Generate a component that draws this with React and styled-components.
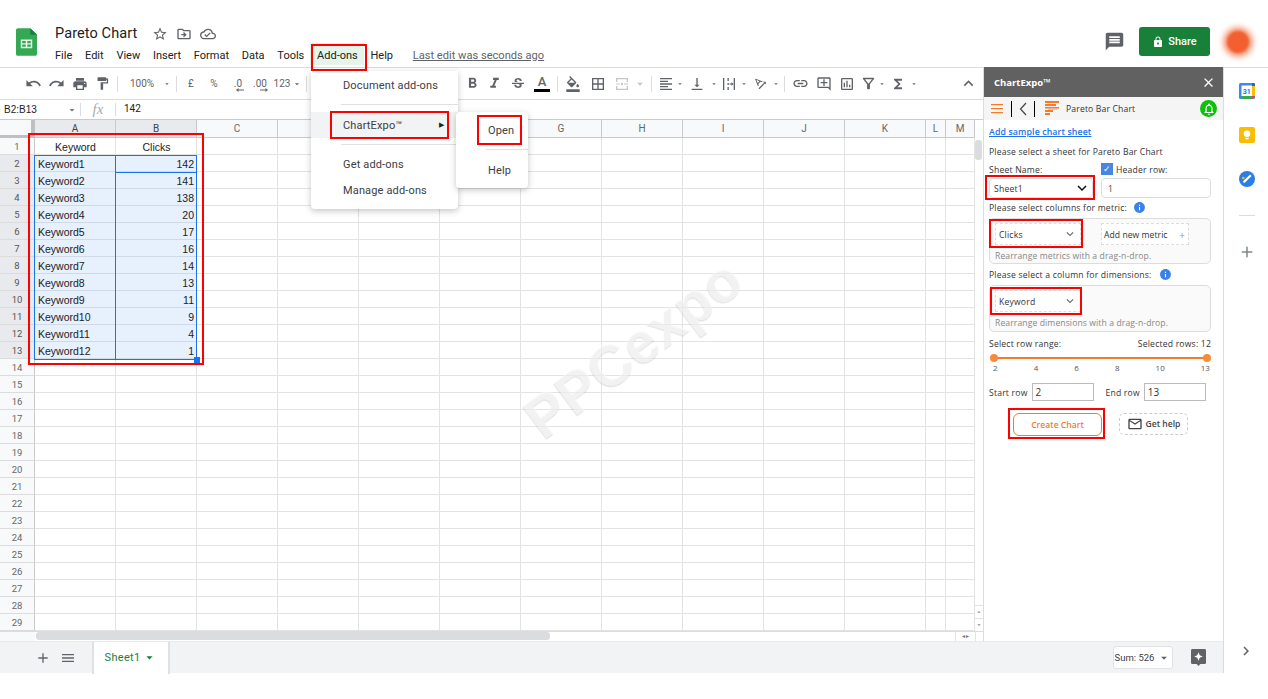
import React from "react";
import styled, { createGlobalStyle } from "styled-components";
import {
  MdUndo, MdRedo, MdPrint, MdFormatPaint, MdFormatBold, MdFormatItalic, MdStrikethroughS,
  MdFormatColorFill, MdBorderAll, MdFormatAlignLeft, MdVerticalAlignBottom, MdLink,
  MdOutlineAddComment, MdOutlineInsertChart, MdOutlineFilterAlt, MdFunctions, MdExpandLess, MdStarBorder,
  MdOutlineDriveFileMove, MdOutlineCloudDone, MdLock, MdMessage, MdAdd, MdMenu, MdArrowDropDown,
  MdClose, MdNotificationsNone, MdChevronRight, MdExpandMore, MdInfo, MdMailOutline,
  MdKeyboardArrowDown, MdTextRotationAngleup,
} from "react-icons/md";

const GlobalStyle = createGlobalStyle`
  html, body { margin: 0; padding: 0; background: #fff; }
  body { font-family: "Roboto", "Liberation Sans", sans-serif; overflow: hidden; }
  * { box-sizing: border-box; }
`;

const COLUMNS = ["A", "B", "C", "D", "E", "F", "G", "H", "I", "J", "K", "L", "M"];
const ROWS = [
  ["Keyword", "Clicks"],
  ["Keyword1", "142"],
  ["Keyword2", "141"],
  ["Keyword3", "138"],
  ["Keyword4", "20"],
  ["Keyword5", "17"],
  ["Keyword6", "16"],
  ["Keyword7", "14"],
  ["Keyword8", "13"],
  ["Keyword9", "11"],
  ["Keyword10", "9"],
  ["Keyword11", "4"],
  ["Keyword12", "1"],
];
const MENU = ["File", "Edit", "View", "Insert", "Format", "Data", "Tools", "Add-ons", "Help"];

export default function App() {
  return (
    <Page>
      <GlobalStyle />
      <Header>
        <SheetsLogo viewBox="0 0 22 29">
          <path d="M2 0h13l7 7v20a2 2 0 0 1-2 2H2a2 2 0 0 1-2-2V2a2 2 0 0 1 2-2z" fill="#34a853" />
          <path d="M15 0l7 7h-7z" fill="#188038" />
          <path d="M5 12h12v9H5z M6.5 13.5v2.2h3.7v-2.2z M11.8 13.5v2.2h3.7v-2.2z M6.5 17.2v2.3h3.7v-2.3z M11.8 17.2v2.3h3.7v-2.3z" fill="#e6f4ea" fillRule="evenodd" />
        </SheetsLogo>
        <TitleBlock>
          <TitleRow>
            <DocTitle>Pareto Chart</DocTitle>
            <MdStarBorder size={16} />
            <MdOutlineDriveFileMove size={16} />
            <MdOutlineCloudDone size={16} />
          </TitleRow>
          <MenuRow>
            {MENU.map(m => <MenuLabel key={m} $active={m === "Add-ons"}>{m}</MenuLabel>)}
            <LastEdit>Last edit was seconds ago</LastEdit>
          </MenuRow>
        </TitleBlock>
        <HeaderRight>
          <MdMessage size={21} color="#5f6368" />
          <ShareButton><MdLock size={12} />Share</ShareButton>
          <Avatar />
        </HeaderRight>
      </Header>

      <Workspace>
        <Editor>
          <EditorTop>
            <LeftColumn>
              <Toolbar>
                <ToolIcon $w={23}><MdUndo size={17} /></ToolIcon>
                <ToolIcon $w={23}><MdRedo size={17} /></ToolIcon>
                <ToolIcon $w={23}><MdPrint size={16} /></ToolIcon>
                <ToolIcon $w={23}><MdFormatPaint size={15} /></ToolIcon>
                <ToolSep $m={3} />
                <ToolText $w={42}>100%</ToolText>
                <ToolCaret $w={8}><MdArrowDropDown size={16} /></ToolCaret>
                <ToolSep $m={5} />
                <ToolText $w={18}>£</ToolText>
                <ToolText $w={28}>%</ToolText>
                <ToolText $w={20}>.0<DecimalArrow viewBox="0 0 8 4"><path d="M0 2l2.500-2v1.500H8v1H2.500V4z" fill="currentColor" /></DecimalArrow></ToolText>
                <ToolText $w={24}>.00<DecimalArrow viewBox="0 0 8 4"><path d="M8 2L5.500 0v1.500H0v1h5.500V4z" fill="currentColor" /></DecimalArrow></ToolText>
                <ToolText $w={20}>123</ToolText>
                <ToolCaret $w={10}><MdArrowDropDown size={14} /></ToolCaret>
                <ToolSep $m={4} />
                <ToolGap $w={150} />
                <ToolIcon $w={22}><MdFormatBold size={17} /></ToolIcon>
                <ToolIcon $w={23}><MdFormatItalic size={17} /></ToolIcon>
                <ToolIcon $w={24}><MdStrikethroughS size={16} /></ToolIcon>
                <TextColor $w={24}>A</TextColor>
                <ToolSep $m={3} />
                <ToolIcon $w={24}><MdFormatColorFill size={16} /></ToolIcon>
                <ToolIcon $w={26}><MdBorderAll size={16} /></ToolIcon>
                <ToolIcon $w={22} $muted>
                  <ToolGlyph viewBox="0 0 14 14">
                    <path d="M1 1h12v4h-1.300V2.300H2.300V5H1zM1 9h1.300v2.700h9.400V9H13v4H1zM1 6.400h4v1.200H1zM9 6.400h4v1.200H9zM6 5.500L8 7 6 8.500zM8 5.500v3L6 7z" fill="currentColor" />
                  </ToolGlyph>
                </ToolIcon>
                <ToolCaret $w={14} $muted><MdArrowDropDown size={14} /></ToolCaret>
                <ToolSep $m={4} />
                <ToolIcon $w={20}><MdFormatAlignLeft size={16} /></ToolIcon>
                <ToolCaret $w={8}><MdArrowDropDown size={14} /></ToolCaret>
                <ToolIcon $w={26}><MdVerticalAlignBottom size={16} /></ToolIcon>
                <ToolCaret $w={8}><MdArrowDropDown size={14} /></ToolCaret>
                <ToolIcon $w={22}>
                  <ToolGlyph viewBox="0 0 14 14">
                    <path d="M1 1h1.300v12H1zM11.700 1H13v12h-1.300zM5.500 1h1.300v3H5.500zM5.500 6h1.300v2H5.500zM5.500 10h1.300v3H5.500zM7.500 6.400h2V5l2 2-2 2V7.600h-2z" fill="currentColor" />
                  </ToolGlyph>
                </ToolIcon>
                <ToolCaret $w={8}><MdArrowDropDown size={14} /></ToolCaret>
                <ToolIcon $w={24}><MdTextRotationAngleup size={15} /></ToolIcon>
                <ToolCaret $w={8}><MdArrowDropDown size={14} /></ToolCaret>
                <ToolSep $m={4} />
                <ToolIcon $w={23}><MdLink size={17} /></ToolIcon>
                <ToolIcon $w={23}><MdOutlineAddComment size={16} /></ToolIcon>
                <ToolIcon $w={23}><MdOutlineInsertChart size={16} /></ToolIcon>
                <ToolIcon $w={20}><MdOutlineFilterAlt size={17} /></ToolIcon>
                <ToolCaret $w={8}><MdArrowDropDown size={12} /></ToolCaret>
                <ToolIcon $w={24}><MdFunctions size={16} /></ToolIcon>
                <ToolCaret $w={8}><MdArrowDropDown size={12} /></ToolCaret>
                <ToolGap $w={39} />
                <ToolIcon $w={23}><MdExpandLess size={19} /></ToolIcon>
              </Toolbar>

              <FormulaBar>
                <NameBox>B2:B13<MdArrowDropDown size={12} color="#777" /></NameBox>
                <FormulaSep />
                <FxLabel>fx</FxLabel>
                <FormulaSep />
                <FormulaValue>142</FormulaValue>
              </FormulaBar>

              <GridRow>
                <SheetGrid>
                  <Corner />
                  {COLUMNS.map(c => <ColHead key={c} $selected={c === "A" || c === "B"}>{c}</ColHead>)}
                  {Array.from({ length: 29 }, (_, r) => (
                    <React.Fragment key={r}>
                      <RowHead $selected={r >= 1 && r <= 12}>{r + 1}</RowHead>
                      {COLUMNS.map((c, i) => {
                        const value = ROWS[r] && ROWS[r][i];
                        const selected = r >= 1 && r <= 12 && i < 2;
                        const align = r === 0 ? "center" : i === 1 ? "right" : "left";
                        return <Cell key={c} $selected={selected} $align={align}>{value}</Cell>;
                      })}
                    </React.Fragment>
                  ))}
                </SheetGrid>
                <VScroll>
                  <VThumb />
                  <VArrows>
                    <ScrollArrow><MdArrowDropDown size={10} style={{ transform: "rotate(180deg)" }} /></ScrollArrow>
                    <ScrollArrow><MdArrowDropDown size={10} /></ScrollArrow>
                  </VArrows>
                </VScroll>
              </GridRow>

              <HScroll>
                <HGutter />
                <HTrack><HThumb /></HTrack>
                <HArrows>◂ ▸</HArrows>
                <HEnd />
              </HScroll>
            </LeftColumn>

            <Panel>
              <PanelHeader>
                ChartExpo™
                <MdClose size={15} />
              </PanelHeader>
              <PanelBar>
                <HamburgerGlyph viewBox="0 0 12 10">
                  <path d="M0 0h12v1.200H0zM0 4h12v1.200H0zM0 8h12v1.200H0z" fill="#f47b2a" />
                </HamburgerGlyph>
                <BarSep $ml={8} />
                <BackGlyph viewBox="0 0 8 14">
                  <path d="M7 1L1.500 7 7 13" fill="none" stroke="#444" strokeWidth="1.200" />
                </BackGlyph>
                <BarSep $ml={7} />
                <BarChartGlyph viewBox="0 0 14 15">
                  <path d="M0 0h14v2H0zM0 3h11v2H0zM0 6h14v1.600H0zM0 9h8v2H0zM0 12h5v2H0z" fill="#f47b2a" />
                  <path d="M3 7.600h9v1.200H3z" fill="#f9b27f" />
                </BarChartGlyph>
                <BarTitle>Pareto Bar Chart</BarTitle>
                <BellBadge><MdNotificationsNone size={14} color="#fff" /></BellBadge>
              </PanelBar>
              <PanelBody>
                <SampleLink>Add sample chart sheet</SampleLink>
                <PanelText>Please select a sheet for Pareto Bar Chart</PanelText>
                <TwoCols>
                  <PanelText>Sheet Name:</PanelText>
                  <CheckRow>
                    <CheckBox>✓</CheckBox>
                    <PanelText>Header row:</PanelText>
                  </CheckRow>
                </TwoCols>
                <SelectRow>
                  <SheetSelect><span>Sheet1</span><MdKeyboardArrowDown size={18} color="#111" /></SheetSelect>
                  <HeaderInput>1</HeaderInput>
                </SelectRow>
                <LabelRow $mt={3} $gap={6}>
                  <PanelText>Please select columns for metric:</PanelText>
                  <MdInfo size={13} color="#3b82e8" />
                </LabelRow>
                <DropBox $h={46}>
                  <DropTop>
                    <DashedSelect><span>Clicks</span><MdExpandMore size={14} color="#666" /></DashedSelect>
                    <AddMetric>Add new metric<em>+</em></AddMetric>
                  </DropTop>
                  <DropNote>Rearrange metrics with a drag-n-drop.</DropNote>
                </DropBox>
                <LabelRow $mt={3} $gap={7}>
                  <PanelText>Please select a column for dimensions:</PanelText>
                  <MdInfo size={13} color="#3b82e8" />
                </LabelRow>
                <DropBox $h={47}>
                  <DropTop>
                    <DashedSelect><span>Keyword</span><MdExpandMore size={14} color="#666" /></DashedSelect>
                  </DropTop>
                  <DropNote>Rearrange dimensions with a drag-n-drop.</DropNote>
                </DropBox>
                <RangeRow>
                  <PanelText>Select row range:</PanelText>
                  <PanelText>Selected rows: 12</PanelText>
                </RangeRow>
                <Slider><Thumb /><Thumb /></Slider>
                <Ticks>
                  {[2, 4, 6, 8, 10, 13].map(t => <span key={t}>{t}</span>)}
                </Ticks>
                <RowInputs>
                  <PanelText>Start row</PanelText>
                  <RowInput>2</RowInput>
                  <EndLabel>End row</EndLabel>
                  <RowInput>13</RowInput>
                </RowInputs>
                <Actions>
                  <CreateButton>Create Chart</CreateButton>
                  <HelpButton><MdMailOutline size={16} />Get help</HelpButton>
                </Actions>
              </PanelBody>
            </Panel>
          </EditorTop>

          <SheetBar>
            <BarIcons>
              <MdAdd size={16} />
              <MdMenu size={16} />
            </BarIcons>
            <SheetTab>Sheet1<MdArrowDropDown size={15} /></SheetTab>
            <SumBox>Sum: 526<MdArrowDropDown size={14} color="#5f6368" /></SumBox>
            <ExploreIcon viewBox="0 0 16 18">
              <path d="M1.500 0h13A1.500 1.500 0 0 1 16 1.500v13a1.500 1.500 0 0 1-1.500 1.500H10l-2 2-2-2H1.500A1.500 1.500 0 0 1 0 14.500v-13A1.500 1.500 0 0 1 1.500 0z" fill="#5f6368" />
              <path d="M8 3.500l1.300 3.200 3.200 1.300-3.200 1.300L8 12.500 6.700 9.300 3.500 8l3.200-1.300z" fill="#fff" />
            </ExploreIcon>
          </SheetBar>
        </Editor>

        <Rail>
          <RailIcon viewBox="0 0 16 16">
            <rect width="16" height="16" rx="1.500" fill="#4285f4" />
            <rect x="2.500" y="2.500" width="10.500" height="10.500" fill="#fff" />
            <path d="M13 0h1.500A1.500 1.500 0 0 1 16 1.500V3h-3z" fill="#1967d2" />
            <path d="M13 3h3v10h-3z" fill="#fbbc04" />
            <path d="M2.500 13H13v3H2.500z" fill="#34a853" />
            <path d="M13 13h3l-3 3z" fill="#ea4335" />
            <text x="7.800" y="11" fontSize="7" fontWeight="700" textAnchor="middle" fill="#1a73e8" fontFamily="Roboto">31</text>
          </RailIcon>
          <RailIcon viewBox="0 0 16 16">
            <rect width="16" height="16" rx="2" fill="#fbbc04" />
            <circle cx="8" cy="6.800" r="3.300" fill="#fff" />
            <rect x="6.400" y="10.800" width="3.200" height="1.500" fill="#fff" />
          </RailIcon>
          <RailIcon viewBox="0 0 16 16">
            <circle cx="8" cy="8" r="8" fill="#2b7de9" />
            <path d="M4 11.500l1.800.3L12.600 5l-1.500-1.400L4.300 10.100z" fill="#fff" />
            <circle cx="4.300" cy="7" r="1.300" fill="#fbbc04" />
          </RailIcon>
          <RailDivider />
          <MdAdd size={18} color="#80868b" />
          <RailChevron><MdChevronRight size={18} color="#5f6368" /></RailChevron>
        </Rail>
      </Workspace>

      <Watermark>PPCexpo</Watermark>

      <SelectionBox $x={34} $y={155} $w={163} $h={205} />
      <SelectionBox $x={115} $y={155} $w={82} $h={205} />
      <SelectionBox $x={115} $y={155} $w={82} $h={18} />
      <FillHandle />

      <AddonsMenu>
        <DropItem>Document add-ons</DropItem>
        <DropSep $mt={6} $mb={7} />
        <DropItem $active>ChartExpo™<MenuArrow>▶</MenuArrow></DropItem>
        <DropSep $mt={6} $mb={6} />
        <DropItem>Get add-ons</DropItem>
        <DropItem>Manage add-ons</DropItem>
      </AddonsMenu>
      <SubMenu>
        <SubItem>Open</SubItem>
        <DropSep $mt={5} $mb={8} />
        <SubItem>Help</SubItem>
      </SubMenu>

      <RedBox $x={28} $y={133} $w={176} $h={232} />
      <RedBox $x={311} $y={44} $w={56} $h={27} />
      <RedBox $x={330} $y={111} $w={119} $h={28} />
      <RedBox $x={477} $y={115} $w={45} $h={30} />
      <RedBox $x={985} $y={175} $w={110} $h={25} />
      <RedBox $x={989} $y={219} $w={94} $h={29} />
      <RedBox $x={990} $y={287} $w={92} $h={28} />
      <RedBox $x={1008} $y={408} $w={97} $h={31} />
    </Page>
  );
}

const Page = styled.div`
  position: relative;
  width: 1268px;
  height: 699px;
  overflow: hidden;
  background: #fff;
`;

const Header = styled.header`
  height: 68px;
  display: flex;
  align-items: flex-start;
  padding: 28px 18px 0 16px;
  border-bottom: 1px solid #dadce0;
`;

const SheetsLogo = styled.svg`
  width: 21px;
  height: 28px;
  flex: none;
`;

const TitleBlock = styled.div`
  margin: -3px 0 0 18px;
`;

const TitleRow = styled.div`
  display: flex;
  align-items: center;
  gap: 8px;
  height: 17px;
  color: #5f6368;
`;

const DocTitle = styled.div`
  font-size: 14.5px;
  color: #202124;
  margin-right: 7px;
  letter-spacing: 0.1px;
`;

const MenuRow = styled.div`
  display: flex;
  align-items: center;
  margin: 6px 0 0;
  height: 14px;
  gap: 12.75px;
  font-size: 11px;
  color: #202124;
`;

const MenuLabel = styled.span`
  position: relative;
  z-index: 0;

  ${props => props.$active && `
    &::before {
      content: "";
      position: absolute;
      z-index: -1;
      left: -7px;
      right: -6px;
      top: -6px;
      bottom: -3px;
      background: #e6f4ea;
    }
  `}
`;

const LastEdit = styled.span`
  margin-left: 7px;
  color: #5f6368;
  text-decoration: underline;
  font-size: 11.1px;
`;

const HeaderRight = styled.div`
  margin-left: auto;
  display: flex;
  align-items: center;
  height: 29px;
  margin-top: -1px;
`;

const ShareButton = styled.div`
  width: 71px;
  height: 29px;
  margin-left: 14px;
  background: #188038;
  color: #fff;
  border-radius: 3px;
  font-size: 11px;
  font-weight: 500;
  display: flex;
  align-items: center;
  justify-content: center;
  gap: 4px;
`;

const Avatar = styled.div`
  width: 22px;
  height: 22px;
  margin: 0 1px 0 17px;
  border-radius: 50%;
  background: #f2602f;
  box-shadow: 0 0 6px 3px #f47a50;
  filter: blur(1px);
`;

const Workspace = styled.div`
  display: flex;
  height: 605px;
`;

const Editor = styled.div`
  width: 1224px;
  flex: none;
  display: flex;
  flex-direction: column;
  border-right: 1px solid #dadce0;
`;

const EditorTop = styled.div`
  display: flex;
  height: 573px;
`;

const LeftColumn = styled.div`
  width: 983px;
  flex: none;
`;

const Toolbar = styled.div`
  height: 32px;
  display: flex;
  align-items: center;
  padding-left: 22px;
  border-bottom: 1px solid #dadce0;
  color: #5f6368;
`;

const ToolIcon = styled.div`
  width: ${props => props.$w}px;
  flex: none;
  display: flex;
  align-items: center;
  justify-content: center;
  color: ${props => props.$muted ? "#c4c7cb" : "#5f6368"};
`;

const ToolCaret = styled(ToolIcon)``;

const ToolGlyph = styled.svg`
  width: 14px;
  height: 14px;
`;

const ToolText = styled.div`
  position: relative;
  width: ${props => props.$w}px;
  flex: none;
  text-align: center;
  font-size: 10px;
  color: #5f6368;
  white-space: nowrap;
`;

const DecimalArrow = styled.svg`
  position: absolute;
  right: 4px;
  bottom: -3px;
  width: 8px;
  height: 4px;
`;

const TextColor = styled.div`
  width: ${props => props.$w}px;
  flex: none;
  text-align: center;
  font-size: 13px;
  font-weight: 500;
  line-height: 14px;
  color: #5f6368;

  &::after {
    content: "";
    display: block;
    width: 16px;
    height: 3px;
    margin: 0 auto;
    background: #000;
  }
`;

const ToolSep = styled.div`
  width: 1px;
  height: 16px;
  flex: none;
  background: #dadce0;
  margin: 0 ${props => props.$m}px;
`;

const ToolGap = styled.div`
  width: ${props => props.$w}px;
  flex: none;
`;

const FormulaBar = styled.div`
  height: 20px;
  display: flex;
  align-items: center;
  border-bottom: 1px solid #c8cacc;
  font-size: 10px;
  color: #222;
`;

const NameBox = styled.div`
  width: 80px;
  padding: 0 2px 0 4px;
  display: flex;
  justify-content: space-between;
  align-items: center;
  font-family: "Liberation Sans", sans-serif;
`;

const FormulaSep = styled.div`
  width: 1px;
  height: 13px;
  background: #dadce0;
`;

const FxLabel = styled.div`
  width: 34px;
  text-align: center;
  font-family: "Liberation Serif", serif;
  font-style: italic;
  font-size: 15px;
  color: #aaa;
`;

const FormulaValue = styled.div`
  margin: -2px 0 0 8px;
`;

const GridRow = styled.div`
  display: flex;
  height: 511px;
`;

const SheetGrid = styled.div`
  width: 975px;
  flex: none;
  display: grid;
  grid-template-columns: 35px repeat(11, 81px) 20px 29px;
  grid-template-rows: 18px repeat(29, 17px);
`;

const Corner = styled.div`
  background: #f8f9fa;
  border-right: 4px solid #c0c0c0;
  border-bottom: 3px solid #c0c0c0;
`;

const ColHead = styled.div`
  display: flex;
  align-items: center;
  justify-content: center;
  font-size: 10px;
  color: ${props => props.$selected ? "#444" : "#666"};
  background: ${props => props.$selected ? "#e8eaed" : "#f8f9fa"};
  border-right: 1px solid #c8cacc;
  border-bottom: 1px solid #c8cacc;
`;

const RowHead = styled.div`
  display: flex;
  align-items: center;
  justify-content: center;
  font-size: 9.5px;
  color: ${props => props.$selected ? "#555" : "#666"};
  background: ${props => props.$selected ? "#e8eaed" : "#f8f9fa"};
  border-right: 1px solid #c8cacc;
  border-bottom: 1px solid #dcdcdc;
`;

const Cell = styled.div`
  padding: 2px 2px 0 3px;
  line-height: 14px;
  font-family: "Liberation Sans", sans-serif;
  font-size: 10.5px;
  color: #222;
  text-align: ${props => props.$align};
  white-space: nowrap;
  background: ${props => props.$selected ? "#e7f0fd" : "#fff"};
  border-right: 1px solid ${props => props.$selected ? "#cfd9e8" : "#e2e3e3"};
  border-bottom: 1px solid ${props => props.$selected ? "#cfd9e8" : "#e2e3e3"};
`;

const VScroll = styled.div`
  width: 8px;
  flex: none;
  background: #fff;
  padding-top: 20px;
  display: flex;
  flex-direction: column;
  justify-content: space-between;
`;

const VThumb = styled.div`
  width: 7px;
  height: 20px;
  background: #dadce0;
  border-radius: 3px;
`;

const VArrows = styled.div`
  display: flex;
  flex-direction: column;
`;

const ScrollArrow = styled.div`
  height: 13px;
  display: flex;
  align-items: center;
  justify-content: center;
  color: #888;
  border-top: 1px solid #e2e3e3;
`;

const HScroll = styled.div`
  height: 10px;
  display: flex;
  border-top: 1px solid #dadce0;
`;

const HGutter = styled.div`
  width: 35px;
  background: #f8f9fa;
`;

const HTrack = styled.div`
  width: 920px;
  background: #fff;
`;

const HThumb = styled.div`
  width: 514px;
  height: 8px;
  margin-left: 1px;
  background: #dadce0;
  border-radius: 3px;
`;

const HArrows = styled.div`
  width: 20px;
  font-size: 6px;
  line-height: 8px;
  color: #777;
  text-align: center;
  border-left: 1px solid #e2e3e3;
`;

const HEnd = styled.div`
  width: 8px;
  border-left: 1px solid #e2e3e3;
`;

const Panel = styled.aside`
  width: 240px;
  flex: none;
  background: #fff;
  border-left: 1px solid #dadce0;
  font-family: "Open Sans", sans-serif;
  margin-top: -1px;
`;

const PanelHeader = styled.div`
  height: 30px;
  background: #616161;
  color: #fff;
  font-size: 9.5px;
  font-weight: 700;
  display: flex;
  align-items: center;
  justify-content: space-between;
  padding: 0 7px 0 10px;
`;

const PanelBar = styled.div`
  height: 23px;
  background: #f5f5f5;
  display: flex;
  align-items: center;
  padding: 0 6px 0 7px;
`;

const HamburgerGlyph = styled.svg`
  width: 12px;
  height: 10px;
`;

const BackGlyph = styled.svg`
  width: 8px;
  height: 14px;
  margin-left: 7px;
`;

const BarSep = styled.div`
  width: 1px;
  height: 16px;
  background: #000;
  margin-left: ${props => props.$ml}px;
`;

const BarChartGlyph = styled.svg`
  width: 14px;
  height: 15px;
  margin-left: 10px;
`;

const BarTitle = styled.div`
  margin: 1px 0 0 7px;
  font-size: 8.6px;
  letter-spacing: 0.15px;
  color: #333;
`;

const BellBadge = styled.div`
  width: 17px;
  height: 17px;
  margin-left: auto;
  border-radius: 50%;
  background: #0cc00c;
  display: flex;
  align-items: center;
  justify-content: center;
`;

const PanelBody = styled.div`
  padding: 0 12px 0 5px;
`;

const SampleLink = styled.div`
  height: 24px;
  line-height: 24px;
  font-size: 8.8px;
  font-weight: 600;
  letter-spacing: 0.1px;
  color: #1a73e8;
  text-decoration: underline;
`;

const PanelText = styled.div`
  height: 14px;
  line-height: 16px;
  font-size: 8.6px;
  letter-spacing: 0.2px;
  color: #333;
  white-space: nowrap;
`;

const TwoCols = styled.div`
  display: grid;
  grid-template-columns: 112px 1fr;
  margin-top: 4px;
`;

const CheckRow = styled.div`
  display: flex;
  align-items: center;
  gap: 3px;
`;

const CheckBox = styled.div`
  width: 12px;
  height: 12px;
  background: #4a86e0;
  color: #fff;
  font-size: 9px;
  line-height: 12px;
  text-align: center;
`;

const SelectRow = styled.div`
  display: grid;
  grid-template-columns: 104px 110px;
  gap: 8px;
  margin-top: 2px;
  height: 19px;
`;

const SheetSelect = styled.div`
  display: flex;
  align-items: center;
  justify-content: space-between;
  padding: 0 1px 0 4px;
  border: 1px solid #ddd;
  border-radius: 4px;
  font-size: 8.6px;
  letter-spacing: 0.2px;
  color: #333;

  span {
    padding-top: 1px;
  }
`;

const HeaderInput = styled.div`
  display: flex;
  align-items: center;
  padding: 1px 0 0 6px;
  border: 1px solid #ddd;
  border-radius: 4px;
  font-size: 8.6px;
  color: #444;
`;

const LabelRow = styled.div`
  display: flex;
  align-items: center;
  gap: ${props => props.$gap}px;
  margin-top: ${props => props.$mt}px;
`;

const DropBox = styled.div`
  height: ${props => props.$h}px;
  width: 222px;
  margin-top: 4px;
  padding: 4px 5px 0;
  background: #fafafa;
  border: 1px solid #ddd;
  border-radius: 5px;
`;

const DropTop = styled.div`
  display: flex;
  gap: 20px;
  height: 22px;
`;

const DashedSelect = styled.div`
  width: 86px;
  display: flex;
  align-items: center;
  justify-content: space-between;
  padding: 0 3px;
  border: 1px dashed #ddd;
  font-size: 8.6px;
  letter-spacing: 0.2px;
  color: #333;
  background: #fff;

  span {
    padding-top: 1px;
  }
`;

const AddMetric = styled(DashedSelect)`
  width: 88px;
  padding: 1px 3px 0 2px;
  letter-spacing: 0.05px;

  em {
    font-style: normal;
    color: #999;
    font-size: 10px;
  }
`;

const DropNote = styled.div`
  margin-top: 5px;
  font-size: 8.6px;
  letter-spacing: 0.1px;
  line-height: 12px;
  color: #888;
  white-space: nowrap;
`;

const RangeRow = styled.div`
  display: flex;
  justify-content: space-between;
  margin-top: 4px;
  width: 222px;
`;

const Slider = styled.div`
  position: relative;
  width: 222px;
  height: 10px;
  margin: 3px 0 0 0;
  display: flex;
  justify-content: space-between;
  padding-left: 1px;

  &::before {
    content: "";
    position: absolute;
    left: 4px;
    right: 2px;
    top: 4px;
    height: 2px;
    background: #f47b2a;
  }
`;

const Thumb = styled.div`
  position: relative;
  width: 8px;
  height: 8px;
  margin-top: 1px;
  border-radius: 50%;
  background: #f68b3b;
`;

const Ticks = styled.div`
  width: 222px;
  height: 10px;
  padding: 0 1px 0 4px;
  display: flex;
  justify-content: space-between;
  font-size: 8px;
  line-height: 10px;
  color: #555;
`;

const RowInputs = styled.div`
  display: flex;
  align-items: center;
  margin-top: 10px;
  height: 18px;
`;

const RowInput = styled.div`
  width: 62px;
  height: 18px;
  margin-left: 4px;
  padding-left: 3px;
  border: 1px solid #bbb;
  font-size: 10px;
  line-height: 17px;
  color: #333;
`;

const EndLabel = styled(PanelText)`
  margin-left: 12px;
`;

const Actions = styled.div`
  display: flex;
  gap: 17px;
  margin: 12px 0 0 24px;
`;

const CreateButton = styled.div`
  width: 89px;
  height: 23px;
  border: 1px solid #f47b2a;
  border-radius: 6px;
  color: #f47b2a;
  font-size: 8.6px;
  font-weight: 600;
  display: flex;
  align-items: center;
  justify-content: center;
`;

const HelpButton = styled.div`
  width: 69px;
  height: 22px;
  border: 1px dashed #ccc;
  border-radius: 5px;
  color: #444;
  font-size: 8.6px;
  font-weight: 600;
  display: flex;
  align-items: center;
  justify-content: center;
  gap: 3px;
`;

const SheetBar = styled.div`
  height: 32px;
  display: flex;
  align-items: center;
  background: #f1f3f4;
  border-top: 1px solid #e8eaed;
`;

const BarIcons = styled.div`
  width: 92px;
  flex: none;
  display: flex;
  justify-content: flex-end;
  gap: 9px;
  padding-right: 16px;
  color: #5f6368;
`;

const SheetTab = styled.div`
  width: 78px;
  height: 32px;
  background: #fff;
  color: #188038;
  font-size: 11px;
  letter-spacing: 0.3px;
  display: flex;
  align-items: center;
  justify-content: center;
  gap: 2px;
  border-left: 2px solid #dfe1e5;
  border-right: 2px solid #dfe1e5;
`;

const SumBox = styled.div`
  margin-left: auto;
  width: 60px;
  height: 23px;
  background: #fff;
  border: 1px solid #e0e2e6;
  border-radius: 3px;
  font-size: 9.5px;
  color: #3c4043;
  display: flex;
  align-items: center;
  justify-content: center;
  gap: 3px;
`;

const ExploreIcon = styled.svg`
  width: 15px;
  height: 17px;
  margin: 0 17px 0 18px;
`;

const Rail = styled.aside`
  width: 44px;
  flex: none;
  display: flex;
  flex-direction: column;
  align-items: center;
  padding: 15px 0 0 2px;
`;

const RailIcon = styled.svg`
  width: 16px;
  height: 16px;
  margin-bottom: 28px;
`;

const RailDivider = styled.div`
  width: 16px;
  height: 1px;
  background: #dadce0;
  margin-bottom: 27px;
`;

const RailChevron = styled.div`
  margin: 381px 2px 0 0;
`;

const Watermark = styled.div`
  position: absolute;
  left: 503px;
  top: 313px;
  width: 260px;
  text-align: center;
  font-family: "Liberation Sans", sans-serif;
  font-size: 58px;
  font-weight: 700;
  line-height: 70px;
  color: rgba(252, 252, 252, 0.6);
  text-shadow: -1px 1px 1px rgba(120, 120, 120, 0.2);
  transform: rotate(-37deg);
`;

const SelectionBox = styled.div`
  position: absolute;
  left: ${props => props.$x}px;
  top: ${props => props.$y}px;
  width: ${props => props.$w}px;
  height: ${props => props.$h}px;
  border: 1px solid #1a73e8;
`;

const FillHandle = styled.div`
  position: absolute;
  left: 194px;
  top: 357px;
  width: 6px;
  height: 6px;
  background: #1a73e8;
`;

const RedBox = styled.div`
  position: absolute;
  left: ${props => props.$x}px;
  top: ${props => props.$y}px;
  width: ${props => props.$w}px;
  height: ${props => props.$h}px;
  border: 2px solid #f00;
`;

const AddonsMenu = styled.div`
  position: absolute;
  left: 311px;
  top: 71px;
  width: 147px;
  height: 138px;
  padding-top: 1px;
  background: #fff;
  border-radius: 0 0 4px 4px;
  box-shadow: 0 2px 6px rgba(60, 64, 67, 0.3);
  font-size: 11px;
  color: #3c4043;
`;

const DropItem = styled.div`
  position: relative;
  height: 26px;
  line-height: 28px;
  padding-left: 32px;
  letter-spacing: 0.15px;
  background: ${props => props.$active ? "#f1f3f4" : "transparent"};
`;

const MenuArrow = styled.span`
  position: absolute;
  right: 14px;
  top: -1px;
  font-size: 7px;
  color: #222;
`;

const DropSep = styled.div`
  height: 1px;
  background: #e0e0e0;
  margin: ${props => props.$mt}px 0 ${props => props.$mb}px 30px;
`;

const SubMenu = styled.div`
  position: absolute;
  left: 456px;
  top: 112px;
  width: 72px;
  height: 76px;
  padding-top: 6px;
  background: #fff;
  border-radius: 4px;
  box-shadow: 0 2px 6px rgba(60, 64, 67, 0.3);
  font-size: 11px;
  color: #3c4043;
`;

const SubItem = styled.div`
  height: 26px;
  line-height: 26px;
  padding-left: 32px;
  letter-spacing: 0.15px;
`;
